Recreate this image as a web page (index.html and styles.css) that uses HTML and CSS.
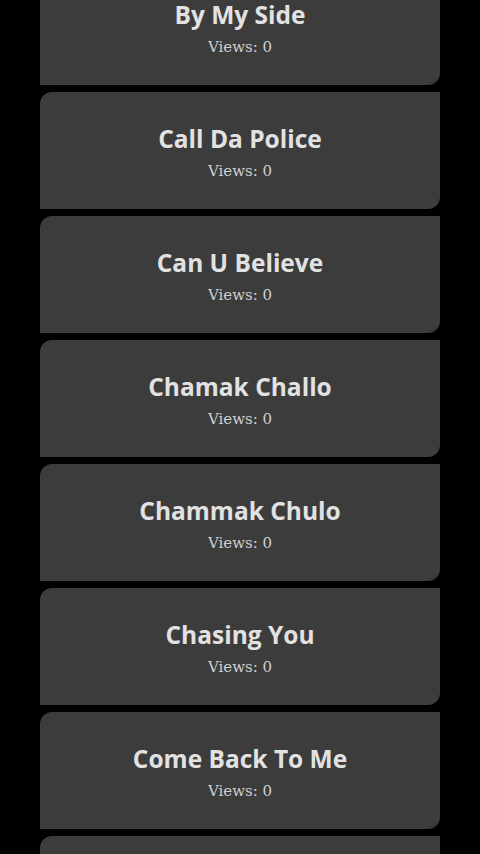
FILE: index.html
```html
<!DOCTYPE html>
<html>
<head>
<meta charset="utf-8">
<link rel="stylesheet" href="styles.css">
</head>
<body>
<div class="list">
  <div class="card"><div class="title">By My Side</div><div class="views">Views: 0</div></div>
  <div class="card"><div class="title">Call Da Police</div><div class="views">Views: 0</div></div>
  <div class="card"><div class="title">Can U Believe</div><div class="views">Views: 0</div></div>
  <div class="card"><div class="title">Chamak Challo</div><div class="views">Views: 0</div></div>
  <div class="card"><div class="title">Chammak Chulo</div><div class="views">Views: 0</div></div>
  <div class="card"><div class="title">Chasing You</div><div class="views">Views: 0</div></div>
  <div class="card"><div class="title">Come Back To Me</div><div class="views">Views: 0</div></div>
  <div class="card"></div>
</div>
</body>
</html>
```
FILE: styles.css
```css
html, body {
  margin: 0;
  padding: 0;
  background: #000;
  overflow: hidden;
  height: 854px;
}
.list {
  display: flex;
  flex-direction: column;
  gap: 7px;
  width: 400px;
  margin: -32px 0 0 40px;
}
.card {
  height: 117px;
  flex-shrink: 0;
  box-sizing: border-box;
  padding-top: 32px;
  background: #3c3c3c;
  border-radius: 12px 0 12px 0;
  text-align: center;
}
.title {
  font-family: "Open Sans", Roboto, sans-serif;
  font-weight: bold;
  font-size: 24.5px;
  line-height: 30px;
  color: #e2e2e2;
}
.views {
  font-family: "DejaVu Serif", serif;
  font-size: 15px;
  line-height: 22px;
  margin-top: 6px;
  color: #cfcfcf;
}
```
